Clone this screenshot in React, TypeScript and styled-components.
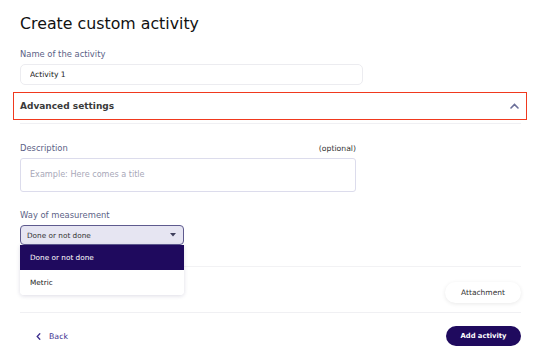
import React, { useState } from 'react';
import styled, { createGlobalStyle } from 'styled-components';

const GlobalStyle = createGlobalStyle`
  body {
    margin: 0;
    background: #ffffff;
    font-family: 'DejaVu Sans', 'Noto Sans', sans-serif;
  }
`;

const options = ['Done or not done', 'Metric'];

function App() {
  const [way, setWay] = useState<string>(options[0]);

  return (
    <Page>
      <GlobalStyle />
      <Title>Create custom activity</Title>

      <Label>Name of the activity</Label>
      <NameInput defaultValue='Activity 1' />

      <AdvancedHeader>
        <span>Advanced settings</span>
        <svg width='9' height='6' viewBox='0 0 9 6'>
          <path d='M1 5 L4.5 1.5 L8 5' fill='none' stroke='#6b6f99' strokeWidth='1.6' strokeLinecap='round' />
        </svg>
      </AdvancedHeader>
      <Divider />

      <Section $gap={18}>
        <LabelRow>
          <Label>Description</Label>
          <Optional>(optional)</Optional>
        </LabelRow>
        <DescriptionBox placeholder='Example: Here comes a title' />
      </Section>

      <Section $gap={17}>
        <Label>Way of measurement</Label>
        <SelectWrap>
          <Select>
            <span>{way}</span>
            <svg width='6' height='4' viewBox='0 0 6 4'>
              <path d='M0 0 H6 L3 3.6 Z' fill='#3f3f5c' />
            </svg>
          </Select>
          <Menu>
            {options.map((o) => (
              <MenuItem key={o} $active={o === way} onClick={() => setWay(o)}>
                {o}
              </MenuItem>
            ))}
          </Menu>
        </SelectWrap>
      </Section>

      <AttachRow>
        <PillButton>Attachment</PillButton>
      </AttachRow>

      <Footer>
        <BackLink>
          <svg width='5' height='7' viewBox='0 0 5 7'>
            <path d='M3.8 0.8 L1.2 3.5 L3.8 6.2' fill='none' stroke='#3d2f8f' strokeWidth='1.3' strokeLinecap='round' />
          </svg>
          Back
        </BackLink>
        <PrimaryButton>Add activity</PrimaryButton>
      </Footer>
    </Page>
  );
}

export default App;

const Page = styled.div`
  width: 540px;
  box-sizing: border-box;
  padding: 0 19px 0 20px;
`;

const Title = styled.h1`
  margin: 14px 0 14px;
  font-size: 15.8px;
  font-weight: 400;
  line-height: 20px;
  color: #111111;
`;

const Label = styled.div`
  font-size: 8.4px;
  line-height: 12px;
  color: #5b5f86;
  margin-bottom: 4px;
`;

const NameInput = styled.input`
  display: block;
  width: 343px;
  height: 21px;
  box-sizing: border-box;
  border: 1px solid #ececf0;
  border-radius: 5px;
  padding: 0 9px;
  font-family: inherit;
  font-size: 7.6px;
  color: #1b1b1b;
  outline: none;
`;

const AdvancedHeader = styled.div`
  margin: 7px -6px 0 -7px;
  height: 28px;
  box-sizing: border-box;
  border: 1.5px solid #f0391e;
  padding: 0 7px 0 6px;
  display: flex;
  align-items: center;
  justify-content: space-between;

  & span {
    font-size: 9px;
    font-weight: 700;
    color: #3a3a3a;
  }
`;

const Divider = styled.div`
  height: 1px;
  background: #f0f0f3;
  margin-top: 3px;
`;

const Section = styled.div<{ $gap: number }>`
  margin-top: ${({ $gap }) => $gap}px;
`;

const LabelRow = styled.div`
  width: 336px;
  display: flex;
  justify-content: space-between;
  align-items: baseline;
`;

const Optional = styled.span`
  font-size: 7.7px;
  line-height: 12px;
  color: #333333;
`;

const DescriptionBox = styled.textarea`
  display: block;
  width: 336px;
  height: 34px;
  box-sizing: border-box;
  resize: none;
  border: 1px solid #dcdcec;
  border-radius: 3px;
  padding: 9px 9px;
  font-family: inherit;
  font-size: 8.1px;
  line-height: 12px;
  outline: none;

  &::placeholder {
    color: #a8a8b8;
  }
`;

const SelectWrap = styled.div`
  position: relative;
  width: 164px;
`;

const Select = styled.div`
  height: 20px;
  box-sizing: border-box;
  background: #e6e5f2;
  border: 1px solid #5e5a8e;
  border-radius: 4px;
  display: flex;
  align-items: center;
  justify-content: space-between;
  padding: 0 7px 0 6px;
  font-size: 7.3px;
  color: #333333;
`;

const Menu = styled.div`
  position: absolute;
  top: 20px;
  left: 0;
  right: 0;
  background: #ffffff;
  border-radius: 0 0 4px 4px;
  box-shadow: 0 1px 4px rgba(30, 20, 80, 0.15);
  overflow: hidden;
  z-index: 2;
`;

const MenuItem = styled.div<{ $active: boolean }>`
  height: 25px;
  display: flex;
  align-items: center;
  padding: 0 10px;
  font-size: 7.3px;
  color: ${({ $active }) => ($active ? '#ffffff' : '#222222')};
  background: ${({ $active }) => ($active ? '#1f0a5e' : '#ffffff')};
  cursor: pointer;
`;

const AttachRow = styled.div`
  margin-top: 21px;
  border-top: 1px solid #f2f2f4;
  border-bottom: 1px solid #f0f0f3;
  padding: 15px 0 9px;
  display: flex;
  justify-content: flex-end;
`;

const PillButton = styled.button`
  width: 76px;
  height: 21px;
  border: none;
  border-radius: 11px;
  background: #ffffff;
  box-shadow: 0 1px 4px rgba(0, 0, 0, 0.09);
  font-family: inherit;
  font-size: 7.5px;
  color: #333333;
  cursor: pointer;
`;

const Footer = styled.div`
  margin-top: 13px;
  display: flex;
  justify-content: space-between;
  align-items: center;
`;

const BackLink = styled.button`
  margin-left: 16px;
  display: flex;
  align-items: center;
  gap: 8px;
  border: none;
  background: none;
  padding: 0;
  font-family: inherit;
  font-size: 7.8px;
  color: #3d2f8f;
  cursor: pointer;
`;

const PrimaryButton = styled.button`
  width: 75px;
  height: 20px;
  border: none;
  border-radius: 10px;
  background: #1f0a5e;
  color: #ffffff;
  font-family: inherit;
  font-size: 6.8px;
  font-weight: 700;
  cursor: pointer;
`;
